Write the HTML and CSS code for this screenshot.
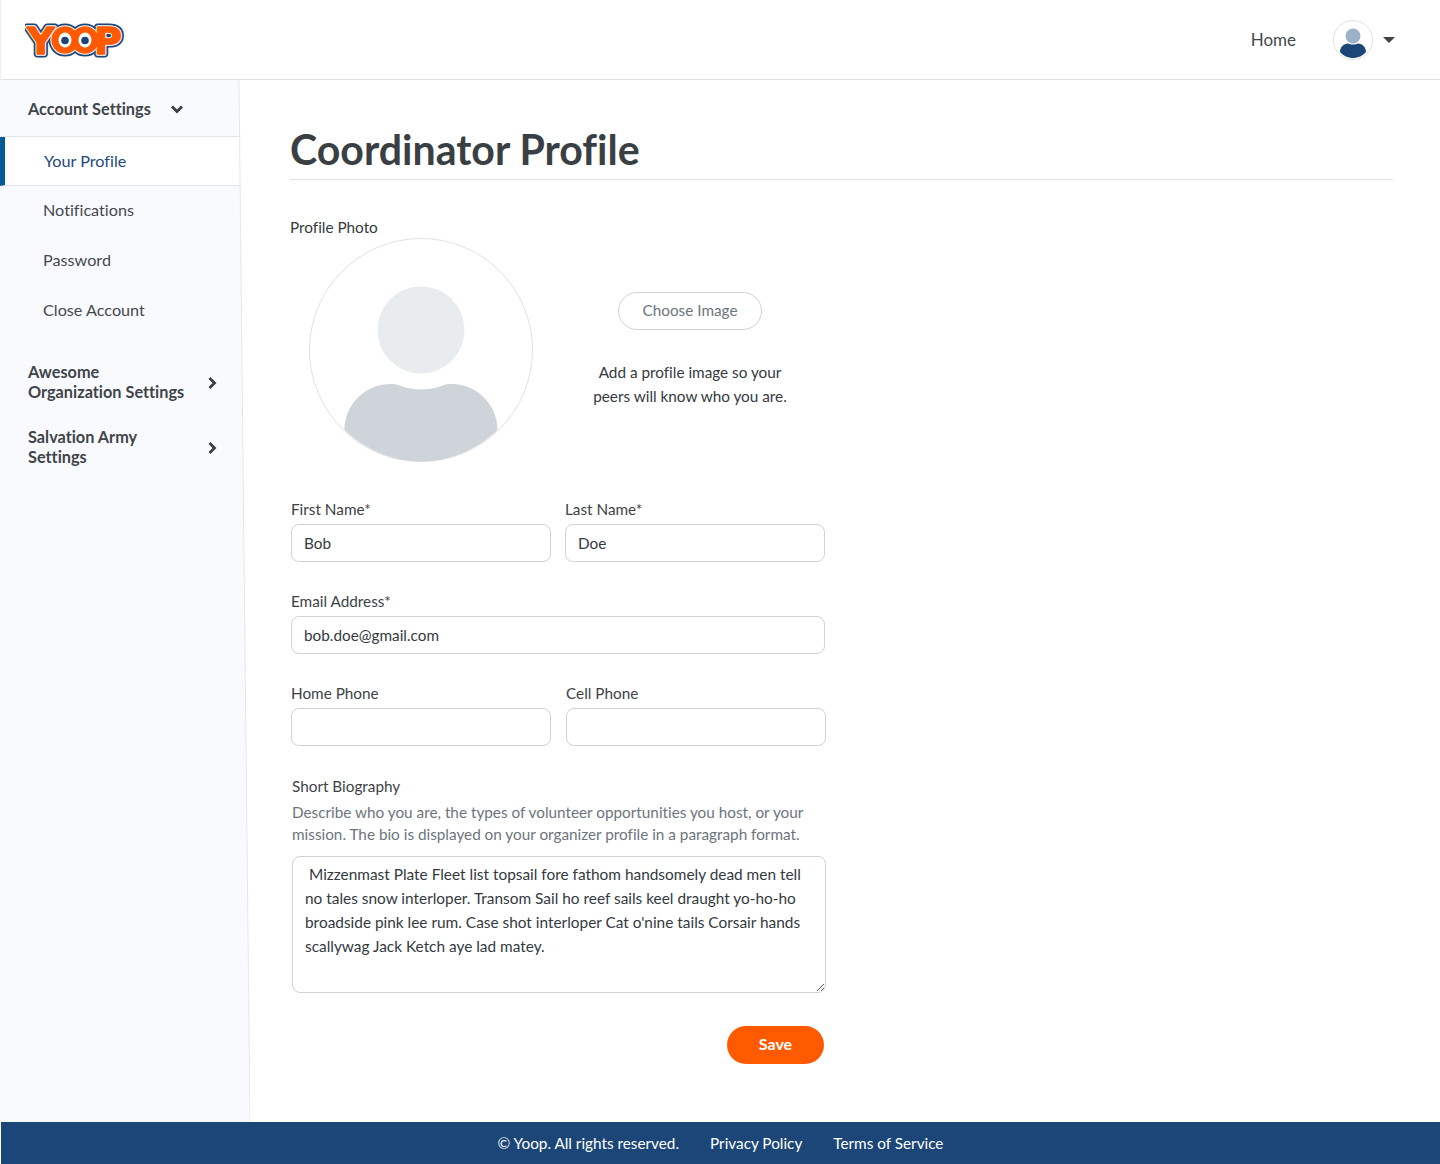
FILE: index.html
```html
<!DOCTYPE html>
<html lang="en">
<head>
<meta charset="utf-8">
<title>Coordinator Profile</title>
<link rel="stylesheet" href="styles.css">
</head>
<body>
<header class="topbar">
  <svg class="logo" width="104" height="42" viewBox="0 0 104 42" role="img" aria-label="Yoop logo">
    <defs>
      <g id="logo-all">
        <text class="logo-letter" x="2" y="34.500">Y</text>
        <circle cx="40" cy="21" r="13"/>
        <circle cx="60" cy="21" r="13"/>
        <text class="logo-letter" x="69" y="34.500">P</text>
      </g>
    </defs>
    <use href="#logo-all" class="logo-navy"/>
    <use href="#logo-all" class="logo-white"/>
    <use href="#logo-all" class="logo-orange"/>
    <ellipse cx="40" cy="21" rx="6.500" ry="7.500" fill="#fff"/>
    <ellipse cx="60" cy="21" rx="6.500" ry="7.500" fill="#fff"/>
    <circle cx="40" cy="21.500" r="3.800" fill="#1c4576"/>
    <circle cx="60" cy="21.500" r="3.800" fill="#1c4576"/>
  </svg>
  <nav class="topnav">
    <a class="topnav-link">Home</a>
    <div class="avatar">
      <svg width="38" height="38" viewBox="0 0 38 38">
        <circle cx="19" cy="15" r="7.500" fill="#9db1cb"/>
        <path d="M6 31c0-5 4-8.500 8-8.500 1.500.7 3 1 5 1s3.500-.3 5-1c4 0 8 3.500 8 8.500-3 3.800-8 6-13 6s-10-2.200-13-6z" fill="#1b4677"/>
      </svg>
    </div>
    <span class="caret"></span>
  </nav>
</header>
<div class="layout">
  <aside class="sidebar">
    <svg class="sidebar-bg" viewBox="0 0 250 1042" preserveAspectRatio="none" aria-hidden="true">
      <polygon points="0,0 239,0 250,1042 0,1042" fill="#f9fafe"/>
      <line x1="239" y1="0" x2="250" y2="1042" stroke="#e6e7ea" stroke-width="1"/>
    </svg>
    <div class="side-group side-open">
      <span>Account Settings</span>
      <svg class="chev" width="14" height="14" viewBox="0 0 14 14"><path d="M2 4.500 7 9.500 12 4.500" fill="none" stroke="#3a3f44" stroke-width="2.800"/></svg>
    </div>
    <a class="side-link side-active">Your Profile</a>
    <a class="side-link">Notifications</a>
    <a class="side-link">Password</a>
    <a class="side-link">Close Account</a>
    <div class="side-group side-closed side-first">
      <span>Awesome<br>Organization Settings</span>
      <svg class="chev" width="14" height="14" viewBox="0 0 14 14"><path d="M4.500 2 9.500 7 4.500 12" fill="none" stroke="#3a3f44" stroke-width="2.800"/></svg>
    </div>
    <div class="side-group side-closed">
      <span>Salvation Army<br>Settings</span>
      <svg class="chev" width="14" height="14" viewBox="0 0 14 14"><path d="M4.500 2 9.500 7 4.500 12" fill="none" stroke="#3a3f44" stroke-width="2.800"/></svg>
    </div>
  </aside>
  <main class="content">
    <h1 class="title">Coordinator Profile</h1>
    <div class="photo-label">Profile Photo</div>
    <section class="photo-row">
      <svg class="photo" width="224" height="224" viewBox="0 0 224 224">
        <circle cx="112" cy="112" r="111.500" fill="#fff" stroke="#dfe1e4"/>
        <circle cx="112" cy="92" r="43.500" fill="#e9ecef"/>
        <path d="M35.500 192c0-25 20-46 46-46 3.500 0 6 .4 9 1.500 6.500 2.700 14 4 21.500 4s15-1.300 21.500-4c3-1.100 5.500-1.500 9-1.500 26 0 46 21 46 46-20 19-47 31.500-76.500 31.500s-56-12.500-76.500-31.500z" fill="#ced4da"/>
      </svg>
      <div class="photo-side">
        <button class="choose" type="button">Choose Image</button>
        <p class="photo-help">Add a profile image so your<br>peers will know who you are.</p>
      </div>
    </section>
    <form class="form">
      <div class="row row-1">
        <label class="field"><span class="lbl">First Name*</span><input class="input" value="Bob"></label>
        <label class="field"><span class="lbl">Last Name*</span><input class="input" value="Doe"></label>
      </div>
      <div class="row row-2">
        <label class="field"><span class="lbl">Email Address*</span><input class="input" value="bob.doe@gmail.com"></label>
      </div>
      <div class="row row-3">
        <label class="field"><span class="lbl">Home Phone</span><input class="input"></label>
        <label class="field"><span class="lbl">Cell Phone</span><input class="input"></label>
      </div>
      <div class="bio">
        <div class="lbl bio-lbl">Short Biography</div>
        <p class="hint">Describe who you are, the types of volunteer opportunities you host, or your<br>mission. The bio is displayed on your organizer profile in a paragraph format.</p>
        <textarea class="textarea"> Mizzenmast Plate Fleet list topsail fore fathom handsomely dead men tell no tales snow interloper. Transom Sail ho reef sails keel draught yo-ho-ho broadside pink lee rum. Case shot interloper Cat o'nine tails Corsair hands scallywag Jack Ketch aye lad matey.</textarea>
      </div>
      <div class="actions"><button class="save" type="button">Save</button></div>
    </form>
  </main>
</div>
<footer class="footer">
  <span>© Yoop. All rights reserved.</span>
  <a>Privacy Policy</a>
  <a>Terms of Service</a>
</footer>
</body>
</html>
```
FILE: styles.css
```css
* { box-sizing: border-box; }
html, body { margin: 0; padding: 0; }
body {
  font-family: "Lato", "Open Sans", sans-serif;
  font-size: 15.300px;
  font-variant-ligatures: none;
  color: #343a40;
  background: #fff;
  width: 1440px;
  height: 1164px;
  display: flex;
  flex-direction: column;
  overflow: hidden;
}
.topbar {
  height: 80px;
  flex: none;
  display: flex;
  align-items: center;
  justify-content: space-between;
  padding: 0 45px 0 24px;
  border-bottom: 1px solid #dee0e3;
  border-left: 1px solid #eeeff1;
}
.logo { display: block; }
.logo-letter {
  font-family: "DejaVu Sans", sans-serif;
  font-weight: 700;
  font-size: 38px;
}
.logo-navy { fill: #1c4576; stroke: #1c4576; stroke-width: 7; stroke-linejoin: round; }
.logo-white { fill: #fff; stroke: #fff; stroke-width: 3.400; stroke-linejoin: round; }
.logo-orange { fill: #ff5a00; stroke: #ff5a00; stroke-width: 1.400; stroke-linejoin: round; }
.topnav { display: flex; align-items: center; }
.topnav-link { font-size: 17px; color: #43484d; margin-right: 37px; }
.avatar {
  width: 40px; height: 40px;
  border: 1px solid #dee2e6;
  border-radius: 50%;
  overflow: hidden;
  margin-right: 10px;
}
.avatar svg { display: block; }
.caret {
  width: 0; height: 0;
  border-left: 6px solid transparent;
  border-right: 6px solid transparent;
  border-top: 6px solid #3f4347;
}
.layout { flex: 1; display: flex; min-height: 0; }
.sidebar {
  width: 250px;
  flex: none;
  position: relative;
}
.sidebar-bg { position: absolute; inset: 0; width: 100%; height: 100%; z-index: -1; }
.side-group {
  display: flex;
  align-items: center;
  font-weight: 700;
  font-size: 16.300px;
  line-height: 20px;
  color: #3f4449;
  padding-left: 28px;
}
.side-open {
  width: 239px;
  height: 57px;
  padding-top: 2px;
  border-bottom: 1px solid #e4e5e8;
  gap: 19px;
}
.side-closed {
  width: 239px;
  justify-content: space-between;
  padding-right: 20px;
  margin-bottom: 25px;
  height: 40px;
}
.side-closed .chev { margin-top: 2px; }
.side-first { margin-top: 26px; }
.side-link {
  display: flex;
  align-items: center;
  height: 50px;
  width: 239px;
  padding-left: 43px;
  padding-bottom: 3px;
  font-size: 16.200px;
  color: #44494e;
}
.side-active {
  height: 49px;
  background: #fff;
  color: #24497a;
  border-bottom: 1px solid #e4e5e8;
  border-left: 5px solid #005a96;
  padding-left: 39px;
  padding-bottom: 1px;
}
.content { flex: 1; padding: 44px 47px 0 40px; min-width: 0; }
.title {
  margin: 0;
  font-family: "Lato", sans-serif;
  font-weight: 700;
  font-size: 41.100px;
  line-height: 50px;
  height: 56px;
  color: #3a3f43;
  border-bottom: 1px solid #dee2e6;
}
.photo-label { margin: 37px 0 1px; line-height: 20px; }
.photo-row { display: flex; align-items: flex-start; padding-left: 19px; }
.photo { display: block; flex: none; }
.photo-side { width: 280px; margin-left: 17px; text-align: center; padding-top: 54px; }
.choose {
  width: 144px; height: 38px;
  padding: 0 0 2px;
  border: 1px solid #ced4da;
  border-radius: 19px;
  background: #fff;
  font: inherit;
  color: #6c757d;
}
.photo-help { margin: 30px 0 0; line-height: 24px; color: #343a40; }
.form { width: 535px; margin-top: 37px; padding-left: 1px; }
.row { display: flex; gap: 14px; }
.row-2, .row-3 { margin-top: 29px; }
.row-3 { width: 535px; }
.row-3 .field:last-child { margin-left: 1px; }
.field { display: block; flex: 1; min-width: 0; }
.lbl { display: block; line-height: 20px; color: #3d4247; margin-bottom: 5px; }
.input {
  display: block;
  width: 100%;
  height: 38px;
  border: 1px solid #ced4da;
  border-radius: 8px;
  padding: 0 12px;
  font: inherit;
  color: #343a40;
  outline: none;
}
.bio { margin-top: 29px; padding-left: 1px; }
.bio-lbl { line-height: 22px; margin-bottom: 4px; }
.hint { margin: 0 0 11px; line-height: 22px; color: #6c757d; }
.textarea {
  display: block;
  width: 534px;
  height: 137px;
  border: 1px solid #ced4da;
  border-radius: 8px;
  padding: 5px 12px;
  font: inherit;
  font-size: 15.400px;
  line-height: 24px;
  color: #343a40;
  outline: none;
}
.actions { display: flex; justify-content: flex-end; margin-top: 33px; padding-right: 1px; }
.save {
  width: 97px; height: 38px;
  padding: 0 0 3px;
  border: 0;
  border-radius: 19px;
  background: #ff5a00;
  color: #fff;
  font: inherit;
  font-weight: 700;
  font-size: 16px;
}
.footer {
  height: 42px;
  flex: none;
  background: #1b4677;
  color: #fff;
  display: flex;
  align-items: center;
  justify-content: center;
  gap: 31px;
  margin-left: 1px;
}
```
